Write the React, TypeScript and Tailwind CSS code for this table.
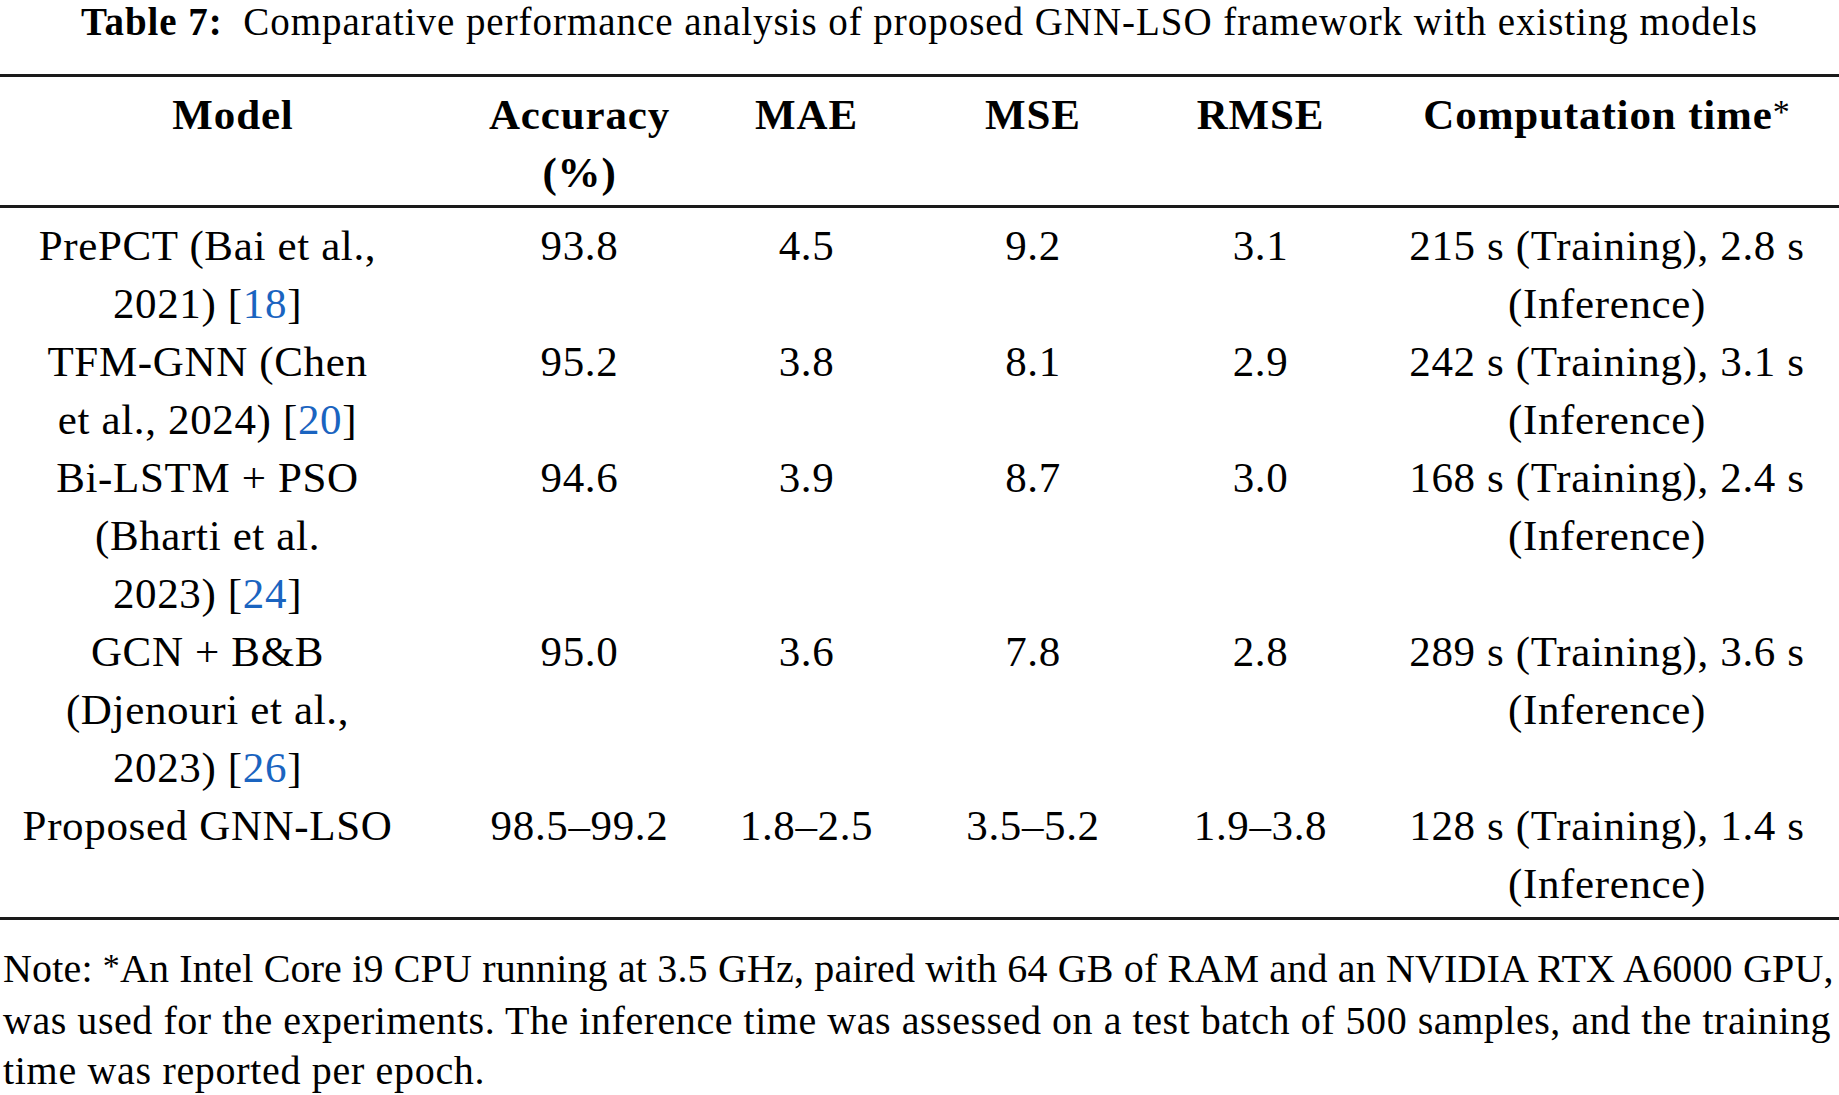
import React from "react";

const Ref = ({ n }: { n: string }) => (
  <>
    [<span className="text-[#1a64c0]">{n}</span>]
  </>
);

type Row = {
  model: React.ReactNode;
  acc: string;
  mae: string;
  mse: string;
  rmse: string;
  time: React.ReactNode;
};

const rows: Row[] = [
  {
    model: (
      <>
        PrePCT (Bai et al.,
        <br />
        2021) <Ref n="18" />
      </>
    ),
    acc: "93.8",
    mae: "4.5",
    mse: "9.2",
    rmse: "3.1",
    time: (
      <>
        215 s (Training), 2.8 s
        <br />
        (Inference)
      </>
    ),
  },
  {
    model: (
      <>
        TFM-GNN (Chen
        <br />
        et al., 2024) <Ref n="20" />
      </>
    ),
    acc: "95.2",
    mae: "3.8",
    mse: "8.1",
    rmse: "2.9",
    time: (
      <>
        242 s (Training), 3.1 s
        <br />
        (Inference)
      </>
    ),
  },
  {
    model: (
      <>
        Bi-LSTM + PSO
        <br />
        (Bharti et al.
        <br />
        2023) <Ref n="24" />
      </>
    ),
    acc: "94.6",
    mae: "3.9",
    mse: "8.7",
    rmse: "3.0",
    time: (
      <>
        168 s (Training), 2.4 s
        <br />
        (Inference)
      </>
    ),
  },
  {
    model: (
      <>
        GCN + B&amp;B
        <br />
        (Djenouri et al.,
        <br />
        2023) <Ref n="26" />
      </>
    ),
    acc: "95.0",
    mae: "3.6",
    mse: "7.8",
    rmse: "2.8",
    time: (
      <>
        289 s (Training), 3.6 s
        <br />
        (Inference)
      </>
    ),
  },
  {
    model: <>Proposed GNN-LSO</>,
    acc: "98.5–99.2",
    mae: "1.8–2.5",
    mse: "3.5–5.2",
    rmse: "1.9–3.8",
    time: (
      <>
        128 s (Training), 1.4 s
        <br />
        (Inference)
      </>
    ),
  },
];

const grid =
  "grid grid-cols-[466px_227px_227px_226px_229px_464px] text-center";

export default function App() {
  return (
    <div
      className="w-[1839px] h-[1095px] bg-white text-black overflow-hidden"
      style={{ fontFamily: '"Liberation Serif", "Times New Roman", serif' }}
    >
      <div className="text-[39px] leading-[43px] tracking-[0.96px] text-center whitespace-nowrap mb-[31px]">
        <span className="font-bold">Table 7:</span>
        {"\u2002"}Comparative performance analysis of proposed GNN-LSO framework
        with existing models
      </div>

      <div className="border-t-[3px] border-b-[3px] border-[#1a1a1a] text-[43px] leading-[58px]">
        <div
          className={`${grid} font-bold tracking-[0.02em] pt-[9px] pb-[3px] border-b-[3px] border-[#1a1a1a]`}
        >
          <div>Model</div>
          <div>
            Accuracy
            <br />
            (%)
          </div>
          <div>MAE</div>
          <div>MSE</div>
          <div>RMSE</div>
          <div>
            Computation time
            <span className="text-[34px] font-normal relative -top-[6px]">*</span>
          </div>
        </div>
        <div className="pt-[9px] pb-[4px] tracking-[0.015em]">
          {rows.map((r, i) => (
            <div key={i} className={grid}>
              <div className="pr-[51px]">{r.model}</div>
              <div>{r.acc}</div>
              <div>{r.mae}</div>
              <div>{r.mse}</div>
              <div>{r.rmse}</div>
              <div>{r.time}</div>
            </div>
          ))}
        </div>
      </div>

      <div className="text-[40px] leading-[50px] pl-[3px] pt-[24px] whitespace-nowrap">
        <p className="tracking-[0.004em]">
          Note: <span className="text-[34px] relative -top-[5px]">*</span>An Intel Core i9 CPU running at 3.5 GHz,
          paired with 64 GB of RAM and an NVIDIA RTX A6000 GPU,
        </p>
        <p className="tracking-[0.0135em]">
          was used for the experiments. The inference time was assessed on a test batch of 500 samples, and the
          training
        </p>
        <p className="tracking-[0.017em]">time was reported per epoch.</p>
      </div>
    </div>
  );
}
